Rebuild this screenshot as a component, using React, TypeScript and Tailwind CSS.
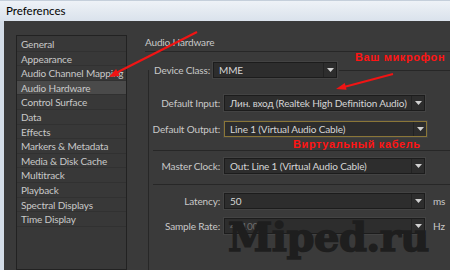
const sections = [
  "General",
  "Appearance",
  "Audio Channel Mapping",
  "Audio Hardware",
  "Control Surface",
  "Data",
  "Effects",
  "Markers & Metadata",
  "Media & Disk Cache",
  "Multitrack",
  "Playback",
  "Spectral Displays",
  "Time Display",
];

function Arrow() {
  return (
    <svg width="7" height="4" viewBox="0 0 7 4">
      <polygon points="0,0 7,0 3.5,4" fill="#d0d0d0" />
    </svg>
  );
}

function Select({ value, className = "", muted = false }) {
  return (
    <div
      className={
        "flex items-center h-[16px] bg-[#2d2d2d] border shadow-[0_0_0_1px_#434343] " +
        className
      }
    >
      <span
        className={
          "pl-[5px] flex-1 whitespace-nowrap overflow-hidden leading-[14px] " +
          (muted ? "text-[#6c6c6c]" : "text-[#d6d6d6]")
        }
      >
        {value}
      </span>
      <div className="w-[13px] shrink-0 h-full border-l border-[#222] flex items-center justify-center">
        <Arrow />
      </div>
    </div>
  );
}

function Row({ label, children, className = "" }) {
  return (
    <div className={"flex items-center h-[16px] " + className}>
      <div className="w-[71px] text-right whitespace-nowrap">{label}</div>
      <div className="ml-[4px] flex items-center">{children}</div>
    </div>
  );
}

export default function App() {
  return (
    <div className="relative w-[450px] h-[270px] overflow-hidden bg-[#3a3a3a] flex flex-col font-['Lato','Liberation_Sans',sans-serif] text-[10px] tracking-[-0.15px] text-[#c9c9c9]">
      <div className="h-[21px] shrink-0 flex items-center pl-[6px] bg-gradient-to-b from-[#eef2f7] to-[#dae2ec] border-t border-[#c5cfdb] text-[11.5px] tracking-normal text-black">
        Preferences
      </div>

      <div className="flex-1 flex min-h-0">
        <div className="w-[4px] bg-[#d4dde8]" />
        <div className="flex-1 flex pl-[12px] pt-[14px]">
          {/* section list */}
          <div className="w-[111px] shrink-0 border border-[#222] bg-[#383838] pt-[1px]">
            {sections.map((s) => (
              <div
                key={s}
                className={
                  "h-[14.6px] leading-[14px] pl-[4px] border-b border-[#313131] whitespace-nowrap overflow-hidden " +
                  (s === "Audio Hardware" ? "bg-[#4a4a4a]" : "")
                }
              >
                {s}
              </div>
            ))}
          </div>

          {/* settings */}
          <div className="flex-1 pl-[18px] flex flex-col">
            <div className="h-[17px] leading-[14px] border-b border-[#272727]">
              Audio Hardware
            </div>

            <fieldset className="mt-[10px] ml-[3px] flex-1 border-l border-t border-[#272727]">
              <legend className="pl-[5px] pr-[2px]">
                <div className="flex items-center gap-[3px]">
                  <span className="whitespace-nowrap">Device Class:</span>
                  <Select value="MME" className="w-[124px] border-[#1c1c1c]" />
                </div>
              </legend>

              <Row label="Default Input:" className="mt-[17px]">
                <Select
                  value="Лин. вход (Realtek High Definition Audio)"
                  className="w-[201px] border-[#1c1c1c]"
                />
              </Row>
              <Row label="Default Output:" className="mt-[10px]">
                <Select
                  value="Line 1 (Virtual Audio Cable)"
                  className="w-[203px] border-[#8a7638]"
                />
              </Row>

              <div className="mt-[13px] ml-[4px] h-px bg-[#272727]" />

              <Row label="Master Clock:" className="mt-[7px]">
                <Select
                  value="Out: Line 1 (Virtual Audio Cable)"
                  className="w-[201px] border-[#1c1c1c]"
                />
              </Row>

              <div className="mt-[10px] ml-[4px] h-px bg-[#272727]" />

              <Row label="Latency:" className="mt-[8px]">
                <Select value="50" className="w-[201px] border-[#1c1c1c]" />
                <span className="ml-[8px]">ms</span>
              </Row>
              <Row label="Sample Rate:" className="mt-[9px]">
                <Select value="44100" muted className="w-[201px] border-[#1c1c1c]" />
                <span className="ml-[8px]">Hz</span>
              </Row>
            </fieldset>
          </div>
        </div>
      </div>

      {/* annotations */}
      <div className="absolute left-[355px] top-[51px] whitespace-nowrap leading-[12px] text-[11px] font-bold tracking-[0.6px] text-[#ff1414] font-['Liberation_Sans',sans-serif]">
        Ваш микрофон
      </div>
      <div className="absolute left-[293px] top-[138px] whitespace-nowrap leading-[12px] text-[11px] font-bold tracking-[0.6px] text-[#ff1414] font-['Liberation_Sans',sans-serif]">
        Виртуальный кабель
      </div>
      <svg className="absolute left-0 top-0" width="450" height="270">
        <line x1="197" y1="32" x2="116" y2="73" stroke="#f01414" strokeWidth="2.2" />
        <polygon points="109,77 119.7,76 116.1,68.9" fill="#f01414" />
        <line x1="393" y1="74" x2="344" y2="87" stroke="#f01414" strokeWidth="2" />
        <polygon points="336,89 346.6,89.8 344.8,83.1" fill="#f01414" />
      </svg>

      <div className="absolute left-[228px] top-[217px] whitespace-nowrap leading-none text-[40px] font-bold tracking-[-0.5px] text-[#1e1e1e] [-webkit-text-stroke:1.5px_#1e1e1e] font-['DejaVu_Serif',serif]">
        Miped.ru
      </div>
    </div>
  );
}
